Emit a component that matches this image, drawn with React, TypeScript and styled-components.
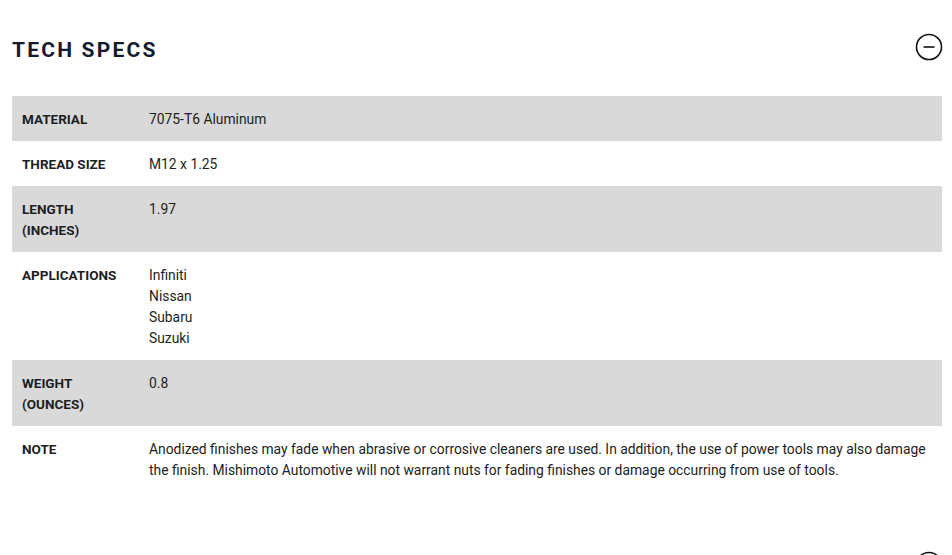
import styled, { createGlobalStyle } from "styled-components";

const GlobalStyle = createGlobalStyle`
    body {
        margin: 0;
        background: #ffffff;
        font-family: Roboto, "Liberation Sans", sans-serif;
        color: #1f2025;
    }
`;

const Page = styled.div`
    padding: 0 10px 0 12px;
`;

const Section = styled.section`
    padding: 34px 0 26px;
`;

const Header = styled.div`
    display: flex;
    align-items: center;
    justify-content: space-between;
    height: 27px;
    margin-bottom: 35px;
`;

const Title = styled.h2`
    margin: 0;
    padding-top: 5px;
    font-size: 21px;
    font-weight: 700;
    letter-spacing: 2.2px;
    color: #141b2c;
`;

const Toggle = styled.button`
    width: 28px;
    height: 28px;
    padding: 0;
    margin: -2px -1px 0 auto;
    border: none;
    background: none;
    cursor: pointer;
    display: flex;
    align-items: center;
    justify-content: center;
`;

const SpecTable = styled.table`
    width: 100%;
    border-collapse: collapse;
    font-size: 13.85px;
    line-height: 21px;
`;

const Row = styled.tr<{ $shaded?: boolean }>`
    background: ${(props) => (props.$shaded ? "#d9d9d9" : "transparent")};
`;

const Label = styled.th`
    width: 107px;
    padding: 13px 10px 11px;
    text-align: left;
    vertical-align: top;
    font-size: 13.5px;
    font-weight: 700;
    text-transform: uppercase;
    color: #1d1e22;
`;

const Value = styled.td`
    padding: 13px 4px 11px 10px;
    vertical-align: top;
    color: #1d1e22;
`;

const Line = styled.div``;

function CircleIcon({ open }: { open: boolean }) {
    return (
        <svg width="28" height="28" viewBox="0 0 28 28" fill="none">
            <circle cx="14" cy="14" r="12.5" stroke="#111" strokeWidth="1.6" />
            <line x1="8.5" y1="14" x2="19.5" y2="14" stroke="#111" strokeWidth="1.6" />
            {!open && <line x1="14" y1="8.5" x2="14" y2="19.5" stroke="#111" strokeWidth="1.6" />}
        </svg>
    );
}

const specs: { label: string; value: string[] }[] = [
    { label: "Material", value: ["7075-T6 Aluminum"] },
    { label: "Thread Size", value: ["M12 x 1.25"] },
    { label: "Length (Inches)", value: ["1.97"] },
    { label: "Applications", value: ["Infiniti", "Nissan", "Subaru", "Suzuki"] },
    { label: "Weight (Ounces)", value: ["0.8"] },
    {
        label: "Note",
        value: [
            "Anodized finishes may fade when abrasive or corrosive cleaners are used. In addition, the use of power tools may also damage the finish. Mishimoto Automotive will not warrant nuts for fading finishes or damage occurring from use of tools.",
        ],
    },
];

function App() {
    return (
        <>
            <GlobalStyle />
            <Page>
                <Section>
                    <Header>
                        <Title>TECH SPECS</Title>
                        <Toggle aria-label="Collapse tech specs">
                            <CircleIcon open={true} />
                        </Toggle>
                    </Header>
                    <SpecTable>
                        <tbody>
                            {specs.map((spec, i) => (
                                <Row key={spec.label} $shaded={i % 2 === 0}>
                                    <Label>{spec.label}</Label>
                                    <Value>
                                        {spec.value.map((line) => (
                                            <Line key={line}>{line}</Line>
                                        ))}
                                    </Value>
                                </Row>
                            ))}
                        </tbody>
                    </SpecTable>
                </Section>
                <Section>
                    <Header>
                        <Toggle aria-label="Expand next section">
                            <CircleIcon open={false} />
                        </Toggle>
                    </Header>
                </Section>
            </Page>
        </>
    );
}

export default App;
